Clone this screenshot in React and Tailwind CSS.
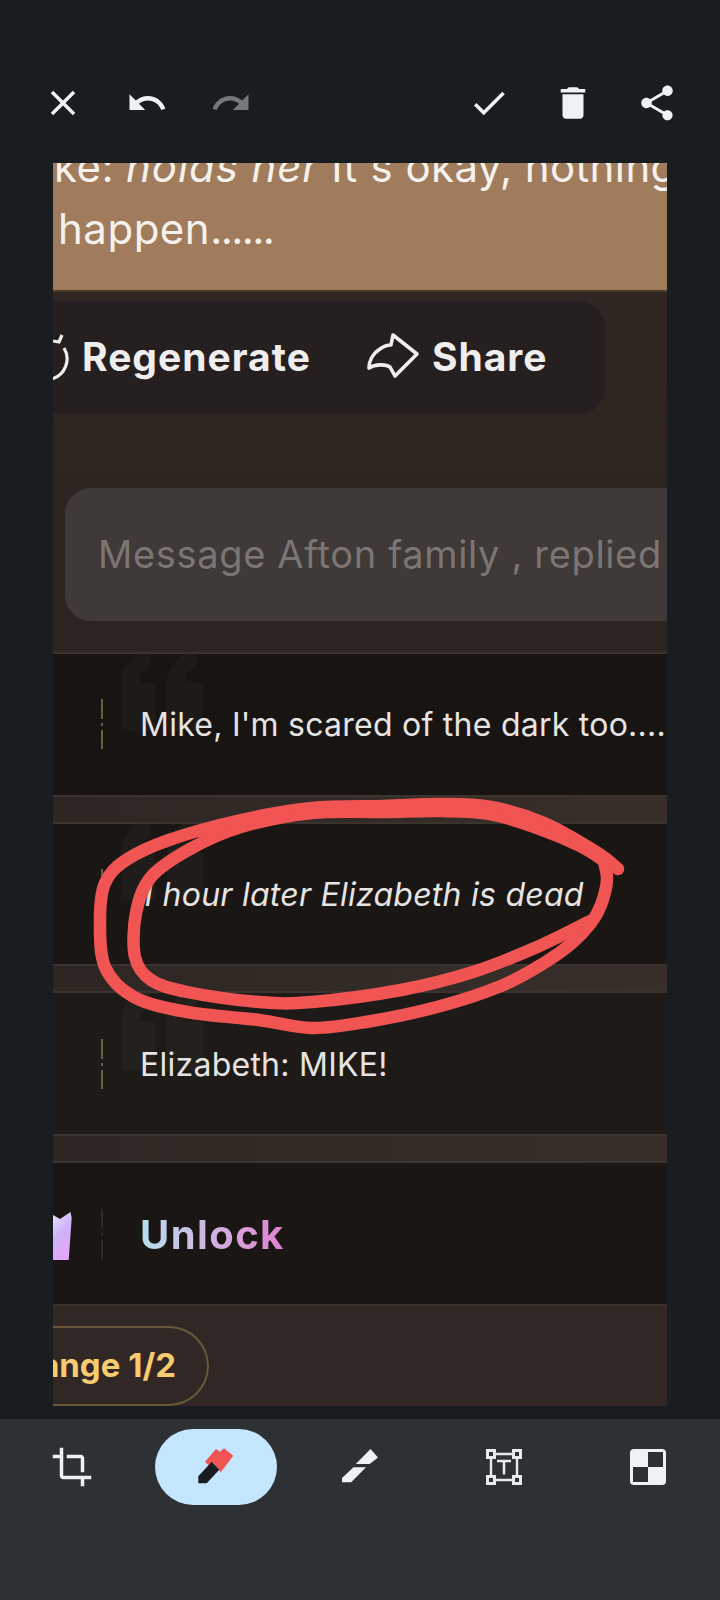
import React from "react";

const FONT = "font-['Inter','Liberation_Sans',sans-serif]";

// smooth line through hand-picked points (catmull-rom to bezier)
function smooth(points) {
  let d = `M${points[0][0]} ${points[0][1]}`;
  for (let i = 0; i < points.length - 1; i++) {
    const p0 = points[i - 1] || points[i];
    const p1 = points[i];
    const p2 = points[i + 1];
    const p3 = points[i + 2] || p2;
    const c1 = [p1[0] + (p2[0] - p0[0]) / 6, p1[1] + (p2[1] - p0[1]) / 6];
    const c2 = [p2[0] - (p3[0] - p1[0]) / 6, p2[1] - (p3[1] - p1[1]) / 6];
    d += ` C${c1[0]} ${c1[1]} ${c2[0]} ${c2[1]} ${p2[0]} ${p2[1]}`;
  }
  return d;
}

// page coordinates, image starts at 53,163
const toImage = (pts) => pts.map(([x, y]) => [x - 53, y - 163]);

const outerStroke = toImage([
  [618, 869], [598, 853], [544, 823], [491, 807], [440, 804], [384, 806], [312, 808], [241, 820], [169, 840],
  [126, 860], [105, 883], [100, 920], [105, 967], [134, 997], [187, 1012], [259, 1020], [312, 1028],
  [366, 1022], [437, 1007], [501, 986], [544, 963], [572, 943], [591, 923], [601, 905], [607, 880], [604, 862],
]);
const innerStroke = toImage([
  [606, 862], [580, 846], [540, 829], [490, 814], [440, 811], [384, 812], [312, 813], [241, 827], [190, 849], [151, 877],
  [136, 913], [135, 957], [151, 980], [187, 992], [259, 1002], [312, 1002], [401, 990], [473, 972],
  [537, 947], [590, 921],
]);

function MaterialIcon({ d, className = "text-[#f0f1f3]" }) {
  return (
    <svg viewBox="0 0 24 24" className={`w-[42px] h-[42px] fill-current ${className}`}>
      <path d={d} />
    </svg>
  );
}

const ICONS = {
  close: "M19 6.41L17.59 5 12 10.59 6.41 5 5 6.41 10.59 12 5 17.59 6.41 19 12 13.41 17.59 19 19 17.59 13.41 12z",
  undo: "M12.5 8c-2.65 0-5.05.99-6.9 2.6L2 7v9h9l-3.62-3.62c1.39-1.16 3.16-1.88 5.12-1.88 3.54 0 6.55 2.31 7.6 5.5l2.37-.78C21.08 11.03 17.15 8 12.5 8z",
  redo: "M18.4 10.6C16.55 8.99 14.15 8 11.5 8c-4.65 0-8.58 3.03-9.96 7.22L3.9 16c1.05-3.19 4.05-5.5 7.6-5.5 1.95 0 3.73.72 5.12 1.88L13 16h9V7l-3.6 3.6z",
  check: "M9 16.17L4.83 12l-1.42 1.41L9 19 21 7l-1.41-1.41z",
  trash: "M6 19c0 1.1.9 2 2 2h8c1.1 0 2-.9 2-2V7H6v12zM19 4h-3.5l-1-1h-5l-1 1H5v2h14V4z",
  share: "M18 16.08c-.76 0-1.44.3-1.96.77L8.91 12.7c.05-.23.09-.46.09-.7s-.04-.47-.09-.7l7.05-4.11c.54.5 1.25.81 2.04.81 1.66 0 3-1.34 3-3s-1.34-3-3-3-3 1.34-3 3c0 .24.04.47.09.7L8.04 9.81C7.5 9.31 6.79 9 6 9c-1.66 0-3 1.34-3 3s1.34 3 3 3c.79 0 1.5-.31 2.04-.81l7.12 4.16c-.05.21-.08.43-.08.65 0 1.61 1.31 2.92 2.92 2.92 1.61 0 2.92-1.31 2.92-2.92s-1.31-2.92-2.92-2.92z",
  crop: "M17 15h2V7c0-1.1-.9-2-2-2H9v2h8v8zM7 17V1H5v4H1v2h4v10c0 1.1.9 2 2 2h10v4h2v-4h4v-2H7z",
};

function PenIcon() {
  return (
    <svg viewBox="0 0 36 36" className="w-[36px] h-[36px] overflow-visible">
      <path d="M7 12.7L18 0l4 2.7L26 -0.7l9.3 7.4L22.7 23.3 15.3 14 10.3 16z" fill="#f15553" />
      <path d="M0.3 27.3L13.7 12.7 21.3 20.7 8.7 34.3H0.3z" fill="#191d20" />
    </svg>
  );
}

function EraserIcon() {
  return (
    <svg viewBox="0 0 36 36" className="w-[36px] h-[36px] fill-[#f0f1f3]">
      <path d="M28.5 0L36 8.5 27.6 15H13.8z" />
      <path d="M11.5 18.3H24L9.2 33.3H0V29z" />
    </svg>
  );
}

function TextBoxIcon() {
  return (
    <svg viewBox="0 0 36 36" className="w-[36px] h-[36px]" fill="none" stroke="#e8e9eb">
      <path d="M5 8v20M31 8v20M8 5h20M8 31h20" strokeWidth="2.4" />
      <rect x="1.5" y="1.5" width="7" height="7" strokeWidth="3" />
      <rect x="27.5" y="1.5" width="7" height="7" strokeWidth="3" />
      <rect x="1.5" y="27.5" width="7" height="7" strokeWidth="3" />
      <rect x="27.5" y="27.5" width="7" height="7" strokeWidth="3" />
      <path d="M11 12h14M18 12v13.5" strokeWidth="2.6" />
    </svg>
  );
}

function MosaicIcon() {
  return (
    <svg viewBox="0 0 36 36" className="w-[36px] h-[36px]">
      <rect width="36" height="36" rx="4" fill="#f0f1f3" />
      <rect x="18" y="3" width="15" height="15" fill="#2d3134" />
      <rect x="3" y="18" width="15" height="15" fill="#2d3134" />
    </svg>
  );
}

function QuoteMark() {
  return (
    <svg viewBox="0 0 84 80" className="absolute left-[68px] top-[-3px] w-[84px] h-[80px] fill-white opacity-[0.025]">
      <path d="M0 80V34C0 14 12 2 30 0v16c-8 2-12 8-12 16h16v48z" />
      <path d="M46 80V34C46 14 58 2 76 0v16c-8 2-12 8-12 16h18v48z" />
    </svg>
  );
}

function Divider({ color = "bg-[#6e5c41]" }) {
  return (
    <div className="absolute left-[48px] top-1/2 -translate-y-1/2 flex flex-col items-center gap-[4px] w-[2px]">
      <div className={`w-[2px] h-[20px] ${color}`} />
      <div className={`w-[2px] h-[3px] ${color}`} />
      <div className={`w-[2px] h-[19px] ${color}`} />
    </div>
  );
}

function MessageRow({ children, italic, bg }) {
  return (
    <div className={`relative h-[141px] flex items-center pl-[87px] pt-[2px] overflow-hidden ${bg}`}>
      <QuoteMark />
      <Divider />
      <span className={`relative whitespace-nowrap text-[32px] leading-none text-[#e6e4e2] tracking-[0.25px] ${italic ? "italic" : ""}`}>
        {children}
      </span>
    </div>
  );
}

function Band() {
  return <div className="h-[29px] bg-gradient-to-r from-[#2d2622] to-[#382f2a] border-y-2 border-[#3a332e]" />;
}

export default function App() {
  return (
    <div className={`w-[720px] h-[1600px] bg-[#191d20] flex flex-col overflow-hidden ${FONT}`}>
      {/* top bar */}
      <div className="pt-[61px] px-[21px] flex justify-between">
        <div className="flex">
          <button className="w-[84px] h-[84px] flex items-center justify-center"><MaterialIcon d={ICONS.close} /></button>
          <button className="w-[84px] h-[84px] flex items-center justify-center"><MaterialIcon d={ICONS.undo} /></button>
          <button className="w-[84px] h-[84px] flex items-center justify-center"><MaterialIcon d={ICONS.redo} className="text-[#77787a]" /></button>
        </div>
        <div className="flex">
          <button className="w-[84px] h-[84px] flex items-center justify-center"><MaterialIcon d={ICONS.check} /></button>
          <button className="w-[84px] h-[84px] flex items-center justify-center"><MaterialIcon d={ICONS.trash} /></button>
          <button className="w-[84px] h-[84px] flex items-center justify-center"><MaterialIcon d={ICONS.share} /></button>
        </div>
      </div>

      {/* the screenshot being edited */}
      <div className="relative mt-[18px] ml-[53px] w-[614px] h-[1243px] overflow-hidden flex flex-col">
        <div className="h-[129px] shrink-0 bg-[#a07c5d] border-b-2 border-[#4a3b2f] text-[42px] text-[#f5f1ec] leading-none whitespace-nowrap overflow-hidden">
          <div className="-mt-[17px] pl-[1px] tracking-[0.4px]">ke: <em className="tracking-[0.9px]">holds her</em> It's okay, nothing</div>
          <div className="mt-[20px] pl-[5px] tracking-[0.5px]">happen<span className="tracking-[-1.6px]">......</span></div>
        </div>

        <div className="h-[360px] shrink-0 bg-gradient-to-b from-[#302622] to-[#2b2420] flex flex-col">
          <div className="mt-[9px] w-[552px] h-[113px] bg-[#251f20] rounded-r-[26px] flex items-center text-[#efeeed] font-bold text-[39px] tracking-[1px]">
            <svg viewBox="0 0 18 50" className="w-[18px] h-[50px] mr-[11px] shrink-0" fill="none" stroke="#efeeed" strokeWidth="3.2">
              <path d="M11 15A21 21 0 0 1 -1 46" />
              <path d="M0 8l6 1 3-7" />
            </svg>
            <span>Regenerate</span>
            <svg viewBox="0 0 70 60" className="ml-[49px] w-[70px] h-[60px] shrink-0" fill="none" stroke="#efeeed" strokeWidth="3.6" strokeLinejoin="round" strokeLinecap="round">
              <path d="M33 7L57 26 35 48 30 39C26 36 15 36 9 40 9 34 12 26 20 21 24 18 28 17 31 17z" />
            </svg>
            <span className="ml-[2px]">Share</span>
          </div>
          <div className="mt-[74px] ml-[12px] w-[640px] h-[133px] bg-[#3f3937] rounded-l-[26px] flex items-center pl-[33px] text-[38px] tracking-[0.65px] text-[#7b7673] whitespace-nowrap">
            Message Afton family , replied
          </div>
        </div>

        <div className="h-[2px] shrink-0 bg-[#3a332e]" />
        <MessageRow bg="bg-[#181412]">Mike, I'm scared of the dark too....</MessageRow>
        <Band />
        <MessageRow bg="bg-[#1a1614]" italic>1 hour later Elizabeth is dead</MessageRow>
        <Band />
        <MessageRow bg="bg-[#1e1a17]">Elizabeth: MIKE!</MessageRow>
        <Band />

        <div className="relative h-[141px] shrink-0 bg-[#1a1613] flex items-center pl-[87px] pt-[2px]">
          <svg viewBox="0 0 19 60" className="absolute left-0 top-[42px] w-[19px] h-[60px]">
            <defs>
              <linearGradient id="crown" x1="0" y1="0" x2="0.4" y2="1">
                <stop offset="0" stopColor="#ece6fb" />
                <stop offset="0.5" stopColor="#cdb4fa" />
                <stop offset="1" stopColor="#e2a6f9" />
              </linearGradient>
            </defs>
            <path d="M0 10l7 4 10.5-7 1.2 6-3 42H0z" fill="url(#crown)" />
          </svg>
          <Divider color="bg-[#282a30]" />
          <span className="text-[40px] tracking-[1.4px] font-bold leading-none bg-gradient-to-r from-[#b5e0ef] to-[#e07fd0] bg-clip-text text-transparent">
            Unlock
          </span>
        </div>

        <div className="flex-1 bg-[#312724] border-t-2 border-[#3a302b] pt-[20px]">
          <div className="w-[156px] h-[80px] border-2 border-l-0 border-[#6b5a3a] rounded-r-[40px] flex items-center justify-end pr-[31px] text-[#f5cd70] font-bold text-[33px] whitespace-nowrap overflow-hidden">
            ange 1/2
          </div>
        </div>

        {/* hand-drawn marker ring */}
        <svg viewBox="0 0 614 1243" className="absolute inset-0 w-[614px] h-[1243px] pointer-events-none" fill="none" stroke="#f15553" strokeWidth="12.5" strokeLinecap="round" strokeLinejoin="round">
          <path d={smooth(outerStroke)} />
          <path d={smooth(innerStroke)} />
        </svg>
      </div>

      {/* bottom tools */}
      <div className="mt-[13px] flex-1 bg-[#2d3134] pt-[10px] grid grid-cols-5 items-start justify-items-center">
        <div className="h-[76px] flex items-center"><MaterialIcon d={ICONS.crop} /></div>
        <div className="w-[122px] h-[76px] rounded-[38px] bg-[#c4e7ff] flex items-center justify-center"><PenIcon /></div>
        <div className="h-[76px] flex items-center"><EraserIcon /></div>
        <div className="h-[76px] flex items-center"><TextBoxIcon /></div>
        <div className="h-[76px] flex items-center"><MosaicIcon /></div>
      </div>
    </div>
  );
}
